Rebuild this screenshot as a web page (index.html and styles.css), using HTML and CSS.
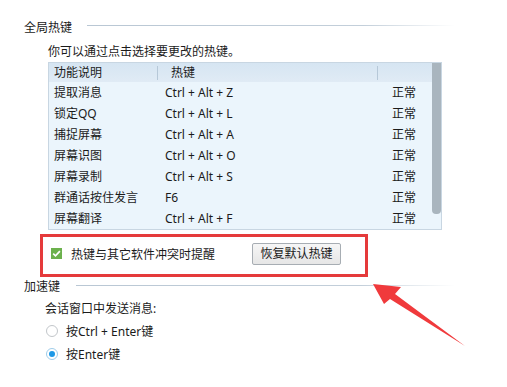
FILE: index.html
```html
<!DOCTYPE html>
<html lang="zh">
<head>
<meta charset="utf-8">
<link rel="stylesheet" href="styles.css">
</head>
<body>
<div class="page">
  <div class="title"><span>全局热键</span><i class="rule"></i></div>
  <div class="desc">你可以通过点击选择要更改的热键。</div>
  <div class="table">
    <div class="main">
      <div class="thead">
        <div class="th th1">功能说明</div>
        <div class="th th2">热键</div>
        <div class="th th3"></div>
      </div>
      <div class="row"><span>提取消息</span><span>Ctrl + Alt + Z</span><span>正常</span></div>
      <div class="row"><span>锁定QQ</span><span>Ctrl + Alt + L</span><span>正常</span></div>
      <div class="row"><span>捕捉屏幕</span><span>Ctrl + Alt + A</span><span>正常</span></div>
      <div class="row"><span>屏幕识图</span><span>Ctrl + Alt + O</span><span>正常</span></div>
      <div class="row"><span>屏幕录制</span><span>Ctrl + Alt + S</span><span>正常</span></div>
      <div class="row"><span>群通话按住发言</span><span>F6</span><span>正常</span></div>
      <div class="row"><span>屏幕翻译</span><span>Ctrl + Alt + F</span><span>正常</span></div>
    </div>
    <div class="track"><div class="thumb"></div></div>
  </div>
  <div class="redbox">
    <span class="check"><svg width="11" height="11" viewBox="0 0 11 11"><path d="M2.2 5.6 L4.5 7.8 L8.9 3.1" fill="none" stroke="#fff" stroke-width="1.7"/></svg></span>
    <span class="checklabel">热键与其它软件冲突时提醒</span>
    <span class="btn">恢复默认热键</span>
  </div>
  <div class="title title2"><span>加速键</span><i class="rule"></i></div>
  <div class="sub">会话窗口中发送消息:</div>
  <div class="radio-row"><span class="radio"></span><span>按Ctrl + Enter键</span></div>
  <div class="radio-row"><span class="radio on"></span><span>按Enter键</span></div>
  <svg class="arrow" width="507" height="387" viewBox="0 0 507 387">
    <polygon points="373,284 401,287 395,294 465,346 390,299 384,304" fill="#f03a3c"/>
  </svg>
</div>
</body>
</html>
```
FILE: styles.css
```css
html, body { margin: 0; padding: 0; background: #fff; }
body {
  font-family: "Noto Sans", "Noto Sans CJK SC", sans-serif;
  font-size: 12px;
  color: #1b1b1b;
  width: 507px;
  height: 387px;
  overflow: hidden;
}
.page {
  position: relative;
  height: 367px;
  padding-top: 20px;
}
.title {
  display: flex;
  align-items: center;
  width: 431px;
  padding-left: 24px;
  line-height: 16px;
  height: 16px;
}
.title .rule {
  flex: 1;
  height: 1px;
  margin-left: 15px;
  margin-bottom: 5px;
  background: linear-gradient(to right, #b9c7d4, #c3cfda 75%, rgba(220,228,235,0));
}
.title2 { margin-top: 2px; }
.title2 .rule { margin-left: 16px; margin-bottom: 3px; }
.desc {
  margin: 8px 0 0 48px;
  line-height: 16px;
  height: 16px;
}
.table {
  margin: 2px 0 0 48px;
  width: 392px;
  height: 166px;
  border: 1px solid #c8d6e2;
  background: #ebf5fc;
  display: flex;
}
.main { flex: 1; }
.thead {
  display: grid;
  grid-template-columns: 109px 220px 1fr;
  height: 19px;
  background: linear-gradient(#d6e5f2, #e0ebf5);
  align-items: center;
}
.th { line-height: 14px; height: 14px; }
.th1 { padding-left: 5px; border-right: 1px solid #b6c8d8; }
.th2 { padding-left: 13px; border-right: 1px solid #b6c8d8; }
.row {
  display: grid;
  grid-template-columns: 111px 228px 1fr;
  height: 21px;
  align-items: center;
  line-height: 21px;
}
.row span:first-child { padding-left: 5px; }
.row span:nth-child(2) { padding-left: 5px; }
.row span:nth-child(3) { padding-left: 4px; }
.track { width: 9px; }
.thumb {
  height: 151px;
  background: #a9b5be;
  border-radius: 0 0 4px 4px;
}
.redbox {
  margin: 4px 0 0 40px;
  width: 314px;
  height: 22px;
  border: 3px solid #e53a3b;
  padding: 6px 0 9px 8px;
  display: flex;
  align-items: center;
}
.check {
  width: 11px;
  height: 11px;
  background: #6cb14d;
  display: flex;
  margin-top: -1px;
}
.checklabel { margin-left: 9px; flex: 1; }
.btn {
  width: 87px;
  height: 20px;
  line-height: 20px;
  text-align: center;
  border: 1px solid #a7adb3;
  border-radius: 2px;
  background: linear-gradient(#f6f6f6, #e6e6e6);
  margin-right: 24px;
}
.sub {
  margin: 6px 0 0 45px;
  line-height: 16px;
  height: 16px;
}
.radio-row {
  display: flex;
  align-items: center;
  height: 23px;
  padding-left: 46px;
}
.sub + .radio-row { margin-top: 2px; }
.radio {
  width: 10px;
  height: 10px;
  border: 1px solid #c2c6ca;
  border-radius: 50%;
  background: #fff;
  margin-right: 8px;
  position: relative;
}
.radio.on { border-color: #9fcdea; }
.radio.on::after {
  content: "";
  position: absolute;
  left: 2px;
  top: 2px;
  width: 6px;
  height: 6px;
  border-radius: 50%;
  background: #1c98e6;
}
.arrow { position: absolute; left: 0; top: 0; pointer-events: none; }
```
